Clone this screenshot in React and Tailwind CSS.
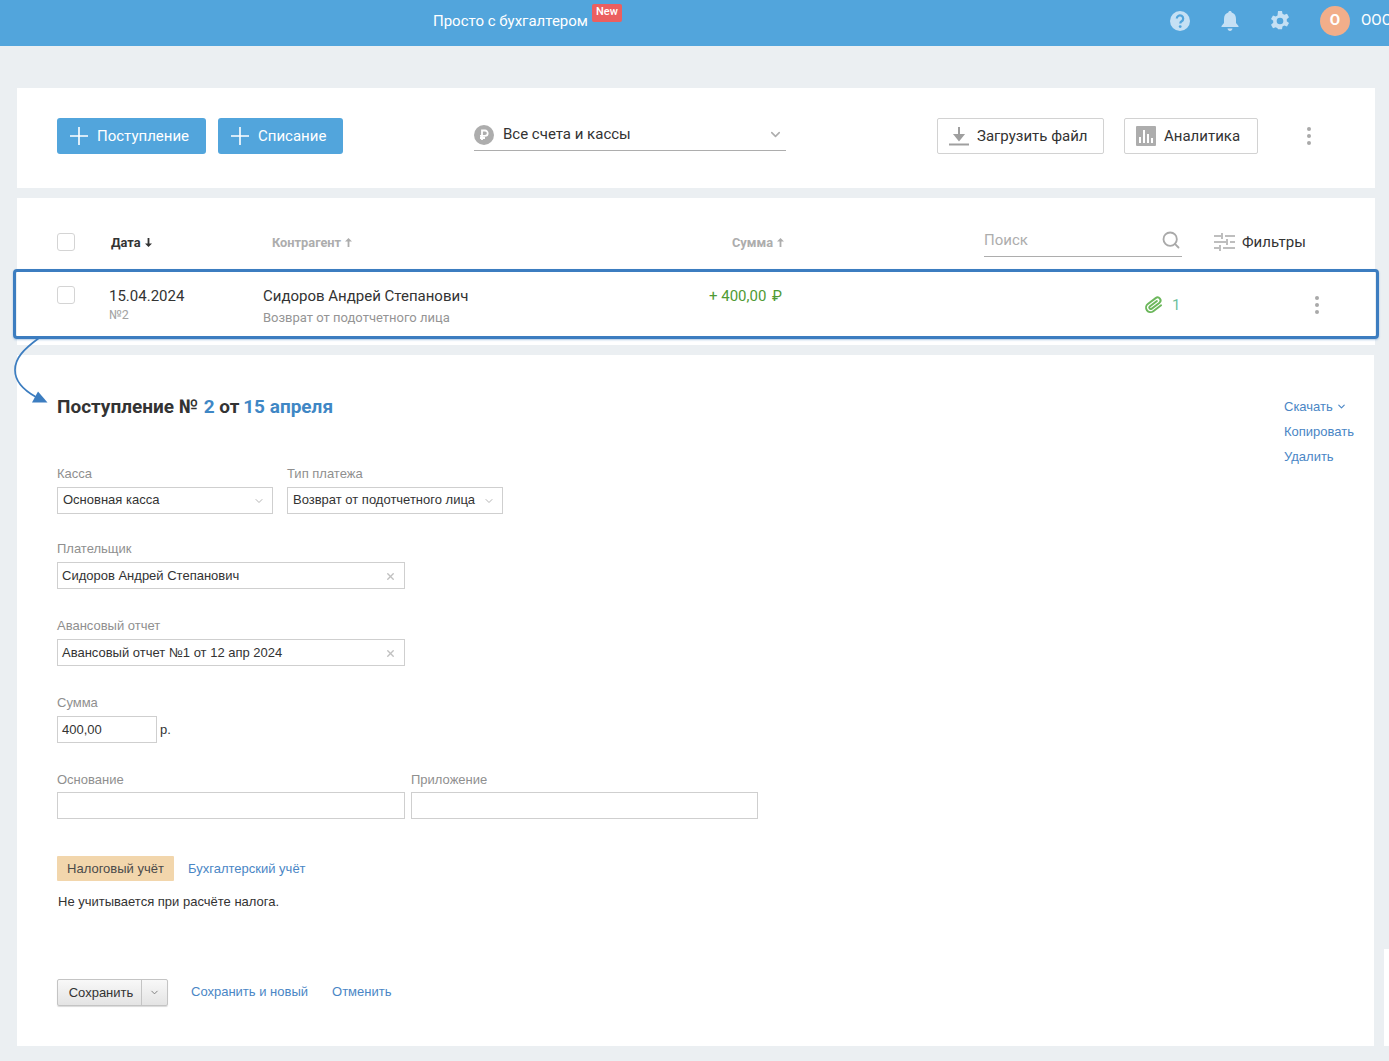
import React from "react";
import { ChevronDown, Search, X } from "lucide-react";

const roboto = "font-['Roboto',sans-serif]";
const arial = "font-['Liberation_Sans',Arial,sans-serif]";

function Dots() {
    return (
        <div className="flex flex-col gap-[3px]">
            <span className="w-[4px] h-[4px] rounded-full bg-[#a9a9a9]" />
            <span className="w-[4px] h-[4px] rounded-full bg-[#a9a9a9]" />
            <span className="w-[4px] h-[4px] rounded-full bg-[#a9a9a9]" />
        </div>
    );
}

function Plus() {
    return (
        <svg width="18" height="18" viewBox="0 0 18 18" className="shrink-0">
            <path d="M9 0v18M0 9h18" stroke="#fff" strokeWidth="1.6" />
        </svg>
    );
}

function SortArrow({ down, color }) {
    return (
        <svg width="7" height="9" viewBox="0 0 7 9" className="ml-[4px] shrink-0">
            <path
                d={down ? "M2.600 0h1.800v5.500H7L3.500 9 0 5.500h2.600z" : "M2.600 9h1.800V3.500H7L3.500 0 0 3.500h2.600z"}
                fill={color}
            />
        </svg>
    );
}

function Checkbox() {
    return <div className="w-[18px] h-[18px] rounded-[3px] border border-[#d4d4d4] bg-white" />;
}

function FieldLabel({ children }) {
    return <div className="text-[13px] leading-[15px] text-[#8f8f8f] mb-[6px]">{children}</div>;
}

function SelectBox({ width, children }) {
    return (
        <div className={`${width} h-[27px] border border-[#cfcfcf] flex items-center justify-between pl-[5px] pr-[7px] text-[13px] text-[#333]`}>
            <span className="-mt-[2px]">{children}</span>
            <ChevronDown size={12} className="text-[#b5b5b5]" />
        </div>
    );
}

function ClearBox({ children }) {
    return (
        <div className="w-[348px] h-[27px] border border-[#cfcfcf] flex items-center justify-between pl-[4px] pr-[8px] text-[13px] text-[#333]">
            <span>{children}</span>
            <X size={11} strokeWidth={3} className="mt-[1px] text-[#c0c0c0]" />
        </div>
    );
}

export default function App() {
    return (
        <div className={`relative w-[1389px] h-[1061px] overflow-hidden bg-[#ebeff2] ${roboto}`}>
            {/* Header */}
            <header className="h-[46px] bg-[#52a5dc] flex items-center pl-[433px] text-white">
                <div className="flex items-start mb-[4px]">
                    <span className="text-[15px] leading-[20px]">Просто с бухгалтером</span>
                    <span className="ml-[4px] -mt-[7px] px-[4px] h-[18px] leading-[16px] rounded-[2px] bg-[#eb5f5f] text-[11px] font-medium">New</span>
                </div>
                <div className="ml-auto flex items-center mb-[5px]">
                    <svg width="20" height="20" viewBox="0 0 20 20" className="mr-[31px]">
                        <circle cx="10" cy="10" r="10" fill="#c5e0f4" />
                        <path d="M6.8 7.6a3.2 3.2 0 1 1 4.9 2.7c-1 .6-1.4 1-1.4 2.1" fill="none" stroke="#52a5dc" strokeWidth="2.2" />
                        <circle cx="10.2" cy="15.6" r="1.4" fill="#52a5dc" />
                    </svg>
                    <svg width="18" height="20" viewBox="0 0 18 20" className="mr-[31px]">
                        <path d="M9 0c1 0 1.7.7 1.7 1.6C13.600 2.400 15 4.800 15 8v4l2.500 3v1H.5v-1L3 12V8c0-3.200 1.400-5.600 4.300-6.400C7.300.7 8 0 9 0z" fill="#c5e0f4" />
                        <path d="M6.500 17.500h5C11.300 19 10.300 20 9 20s-2.300-1-2.500-2.500z" fill="#c5e0f4" />
                    </svg>
                    <svg width="20" height="20" viewBox="0 0 24 24" className="mr-[30px]">
                        <path fillRule="evenodd" fill="#c5e0f4" d="M9.600 0h4.800l.6 3.400c.8.300 1.500.7 2.100 1.200l3.300-1.200 2.400 4.200-2.700 2.200c.1.800.1 1.600 0 2.400l2.700 2.200-2.400 4.200-3.300-1.200c-.6.500-1.300.9-2.100 1.200l-.6 3.400H9.600L9 20.600c-.8-.3-1.500-.7-2.100-1.200l-3.300 1.200-2.400-4.200 2.700-2.200c-.1-.8-.1-1.600 0-2.400L1.200 9.600l2.400-4.200 3.300 1.200C7.500 6.100 8.200 5.700 9 5.400zM12 8a4 4 0 1 0 0 8 4 4 0 0 0 0-8z" />
                    </svg>
                    <div className="w-[30px] h-[30px] rounded-full bg-[#f2ae8a] flex items-center justify-center text-[15px] font-bold shrink-0">О</div>
                    <div className="w-[28px] ml-[11px] overflow-hidden text-[15px] whitespace-nowrap">ООО</div>
                </div>
            </header>

            {/* Toolbar */}
            <section className="mt-[42px] ml-[17px] w-[1358px] h-[100px] bg-white flex items-center pl-[40px] pb-[4px]">
                <button className="w-[149px] h-[36px] rounded-[3px] bg-[#52a5dc] text-white text-[15px] flex items-center pl-[13px] gap-[9px]">
                    <Plus />Поступление
                </button>
                <button className="ml-[12px] w-[125px] h-[36px] rounded-[3px] bg-[#52a5dc] text-white text-[15px] flex items-center pl-[13px] gap-[9px]">
                    <Plus />Списание
                </button>
                <div className="ml-[131px] w-[312px] h-[33px] -mt-[4px] pt-[2px] border-b border-[#adadad] flex items-center text-[#333] text-[15px]">
                    <svg width="20" height="20" viewBox="0 0 20 20" className="mr-[9px]">
                        <circle cx="10" cy="10" r="10" fill="#adadad" />
                        <path d="M8 15V5.500h3a2.700 2.700 0 0 1 0 5.400H6M6 13h5" fill="none" stroke="#fff" strokeWidth="1.800" />
                    </svg>
                    Все счета и кассы
                    <ChevronDown size={15} strokeWidth={2.500} className="ml-auto mr-[3px] text-[#adadad]" />
                </div>
                <button className="ml-[151px] w-[167px] h-[36px] rounded-[2px] border border-[#d2d2d2] flex items-center pl-[11px] gap-[8px] text-[15px] text-[#333]">
                    <svg width="20" height="20" viewBox="0 0 20 20">
                        <path d="M10 1v12M6 9l4 5 4-5z" stroke="#9f9f9f" strokeWidth="2" fill="#9f9f9f" />
                        <path d="M0 18.500h20" stroke="#9f9f9f" strokeWidth="2" />
                    </svg>
                    Загрузить файл
                </button>
                <button className="ml-[20px] w-[134px] h-[36px] rounded-[2px] border border-[#d2d2d2] flex items-center pl-[11px] gap-[8px] text-[15px] text-[#333]">
                    <svg width="20" height="20" viewBox="0 0 20 20">
                        <rect width="20" height="20" rx="1" fill="#adadad" />
                        <path d="M3 17v-6h2v6zM7 17V4h2v13zM11 17V8h2v9zM15 17v-5h2v5z" fill="#fff" />
                    </svg>
                    Аналитика
                </button>
                <div className="ml-[49px]"><Dots /></div>
            </section>

            {/* List */}
            <section className="mt-[10px] ml-[17px] w-[1358px] h-[147px] bg-white pl-[40px]">
                <div className="h-[71px] flex items-center pt-[17px] text-[12.800px] font-bold text-[#adadad]">
                    <Checkbox />
                    <span className="ml-[36px] w-[161px] mt-[1px] flex items-center text-[#333]">Дата<SortArrow down color="#333" /></span>
                    <span className="w-[460px] mt-[1px] flex items-center">Контрагент<SortArrow color="#adadad" /></span>
                    <span className="w-[252px] mt-[1px] flex items-center">Сумма<SortArrow color="#adadad" /></span>
                    <div className="w-[198px] h-[33px] -mt-[4px] pt-[2px] border-b border-[#adadad] flex items-center justify-between text-[15px] font-normal">
                        Поиск
                        <Search size={20} strokeWidth={2.200} className="mr-[1px] -mt-[2px] text-[#a9a9a9]" />
                    </div>
                    <div className="ml-[32px] flex items-center text-[15px] font-normal text-[#333] gap-[7px]">
                        <svg width="21" height="18" viewBox="0 0 21 18">
                            <path d="M0 3h7M11 3h10M8 0v6M0 9h12M16 9h5M13 6v6M0 15h5M9 15h12M6 12v6" stroke="#a9a9a9" strokeWidth="1.500" fill="none" />
                        </svg>
                        Фильтры
                    </div>
                </div>
                <div className="h-[68px] flex items-start">
                    <div className="mt-[17px]"><Checkbox /></div>
                    <div className="ml-[34px] w-[154px] pt-[18px]">
                        <div className="text-[15px] leading-[18px] text-[#333]">15.04.2024</div>
                        <div className="text-[12.500px] leading-[14px] mt-[3px] text-[#a3a3a3]">№2</div>
                    </div>
                    <div className="w-[446px] pt-[18px]">
                        <div className="text-[15px] leading-[18px] text-[#333]">Сидоров Андрей Степанович</div>
                        <div className="text-[13px] leading-[15px] mt-[5px] text-[#959595]">Возврат от подотчетного лица</div>
                    </div>
                    <div className="w-[436px] pt-[18px] text-[15px] leading-[18px] text-[#4f9a34]">
                        + 400,00 <span className="ml-[2px]">₽</span>
                    </div>
                    <div className="pt-[26px]">
                        <svg width="18" height="20" viewBox="0 0 24 24" fill="none" stroke="#6cb75c" strokeWidth="2.600" strokeLinecap="round" className="rotate-[8deg]">
                            <path d="M21.400 11.100 12.200 20.300a6 6 0 0 1-8.500-8.500l9.200-9.200a4 4 0 0 1 5.700 5.700l-9.200 9.200a2 2 0 0 1-2.800-2.800l8.500-8.500" />
                        </svg>
                    </div>
                    <span className="ml-[9px] pt-[27px] text-[15px] leading-[18px] text-[#6cbf9c]">1</span>
                    <div className="ml-[135px] pt-[27px]"><Dots /></div>
                </div>
            </section>

            {/* Document */}
            <section className={`mt-[10px] ml-[17px] w-[1357px] h-[691px] bg-white flex justify-between pl-[40px] pt-[41px] ${arial}`}>
                <div>
                    <h1 className={`text-[19px] leading-[22px] font-bold text-[#333] ${roboto}`}>
                        Поступление № <span className="ml-[1px] text-[#3f87c5]">2</span> от <span className="-ml-[1px] text-[#3f87c5]">15 апреля</span>
                    </h1>

                    <div className="flex gap-[14px] mt-[48px]">
                        <div>
                            <FieldLabel>Касса</FieldLabel>
                            <SelectBox width="w-[216px]">Основная касса</SelectBox>
                        </div>
                        <div>
                            <FieldLabel>Тип платежа</FieldLabel>
                            <SelectBox width="w-[216px]">Возврат от подотчетного лица</SelectBox>
                        </div>
                    </div>

                    <div className="mt-[27px]">
                        <FieldLabel>Плательщик</FieldLabel>
                        <ClearBox>Сидоров Андрей Степанович</ClearBox>
                    </div>
                    <div className="mt-[29px]">
                        <FieldLabel>Авансовый отчет</FieldLabel>
                        <ClearBox>Авансовый отчет №1 от 12 апр 2024</ClearBox>
                    </div>
                    <div className="mt-[29px]">
                        <FieldLabel>Сумма</FieldLabel>
                        <div className="flex items-center text-[13px] text-[#333]">
                            <div className="w-[100px] h-[27px] border border-[#cfcfcf] flex items-center pl-[4px]">400,00</div>
                            <span className="ml-[3px]">р.</span>
                        </div>
                    </div>
                    <div className="mt-[29px] flex gap-[6px]">
                        <div>
                            <FieldLabel>Основание</FieldLabel>
                            <div className="-mt-[1px] w-[348px] h-[27px] border border-[#cfcfcf]" />
                        </div>
                        <div>
                            <FieldLabel>Приложение</FieldLabel>
                            <div className="-mt-[1px] w-[347px] h-[27px] border border-[#cfcfcf]" />
                        </div>
                    </div>

                    <div className="mt-[37px] flex items-center text-[13px]">
                        <span className="w-[117px] h-[25px] flex items-center justify-center rounded-[1px] bg-[#f2d6ac] text-[#4a4a4a]">Налоговый учёт</span>
                        <span className="ml-[14px] text-[#4a86c5]">Бухгалтерский учёт</span>
                    </div>
                    <p className="mt-[13px] ml-[1px] text-[13px] leading-[15px] text-[#333]">Не учитывается при расчёте налога.</p>

                    <div className="mt-[70px] flex items-start text-[13px]">
                        <div className="h-[27px] flex rounded-[2px] border border-[#c4c4c4] bg-gradient-to-b from-[#f8f8f8] to-[#e4e4e4] shadow-[0_1px_1px_rgba(0,0,0,0.15)] text-[#333]">
                            <span className="w-[84px] pl-[3px] flex items-center justify-center border-r border-[#c4c4c4]">Сохранить</span>
                            <span className="w-[25px] flex items-center justify-center"><ChevronDown size={11} className="text-[#777]" /></span>
                        </div>
                        <span className="ml-[23px] mt-[3px] text-[#4a86c5]">Сохранить и новый</span>
                        <span className="ml-[24px] mt-[3px] text-[#4a86c5]">Отменить</span>
                    </div>
                </div>

                <div className="w-[90px] text-[13px] leading-[25px] text-[#4a86c5] -mt-[2px]">
                    <div className="flex items-center gap-[3px]">Скачать <ChevronDown size={11} strokeWidth={2.500} /></div>
                    <div>Копировать</div>
                    <div>Удалить</div>
                </div>
            </section>

            {/* White strip at the right edge */}
            <div className="absolute left-[1384px] top-[949px] w-[5px] h-[97px] bg-white" />

            {/* Highlight over the selected row */}
            <div className="absolute left-[13px] top-[269px] w-[1366px] h-[70px] rounded-[4px] border-[3px] border-[#3c7dc0] shadow-[0_1px_2px_rgba(60,125,192,0.4)]" />
            <svg className="absolute left-[10px] top-[335px]" width="42" height="72" viewBox="0 0 42 72" fill="none">
                <path d="M29 3C14 14 5 23 5 35c0 13 12 22 21 27" stroke="#3c7dc0" strokeWidth="1.700" />
                <path d="M37.500 67.500H22L28 56.500z" fill="#3c7dc0" />
            </svg>
        </div>
    );
}
